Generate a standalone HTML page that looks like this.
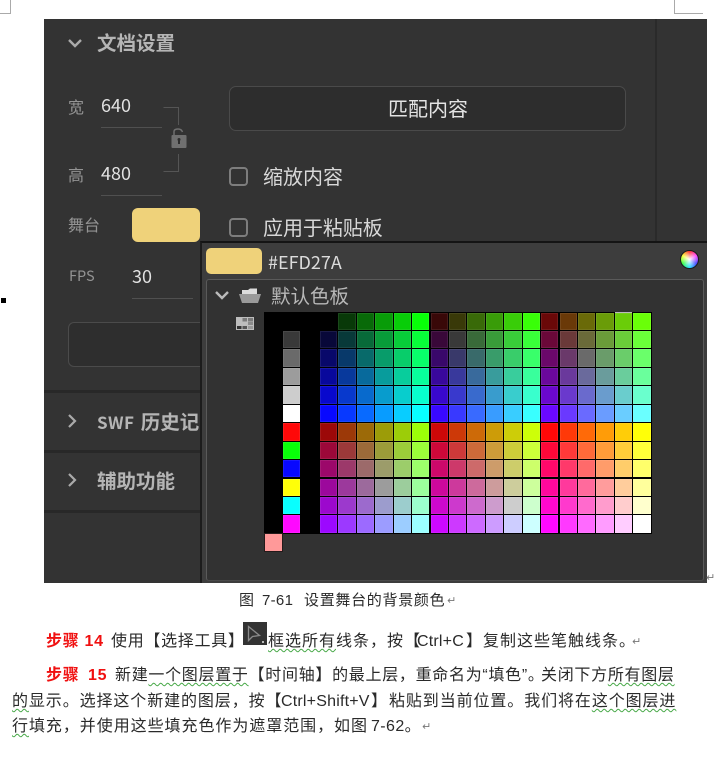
<!DOCTYPE html>
<html lang="zh"><head><meta charset="utf-8"><title>图 7-61</title>
<style>
html,body{margin:0;padding:0;background:#fff}
body{position:relative;width:724px;height:763px;overflow:hidden;font-family:"Liberation Sans","Noto Sans CJK SC",sans-serif}
.a{position:absolute;white-space:nowrap}
.t{position:absolute;white-space:nowrap;line-height:20px;height:20px}
.cn{font-family:"Noto Sans CJK SC",sans-serif}
.line{position:absolute;background:#555}
.sec{position:absolute;left:44px;width:156px;height:3px;background:#282828}
.cb{position:absolute;left:229px;width:15px;height:15px;border:2.5px solid #7d7d7d;border-radius:4px}
#grid{position:absolute;left:264px;top:312px;width:388px;height:221.5px;background:#000;display:grid;grid-template-columns:repeat(21,17.3px);grid-auto-rows:17.3px;gap:1.15px;padding:.6px;box-sizing:border-box}
#grid i{display:block}
#grid i:not([style$="#000"]){box-shadow:inset 0 0 0 1px rgba(255,255,255,.08),inset 0 0 0 30px rgba(255,255,255,.03)}
.body{font-family:"Liberation Sans","Noto Sans CJK SC",sans-serif;font-size:16px;color:#2a2a2a;letter-spacing:.9px;font-weight:400}
.red{color:#f01010;font-weight:700;letter-spacing:.7px}
.w{text-decoration:underline wavy #46a846 1px;text-underline-offset:1.5px}
.l{letter-spacing:.2px}
.ret{position:absolute;color:#777;font-size:11px;line-height:12px;font-family:"DejaVu Sans",sans-serif}
</style></head>
<body>
<!-- page corner marks -->
<div class="line" style="left:10px;top:0;width:1px;height:14px;background:#aaa"></div>
<div class="line" style="left:0;top:13px;width:11px;height:1px;background:#aaa"></div>
<div class="line" style="left:674px;top:0;width:1px;height:14px;background:#aaa"></div>
<div class="line" style="left:674px;top:13px;width:29px;height:1px;background:#aaa"></div>
<div class="line" style="left:1px;top:298px;width:5px;height:5px;background:#000"></div>

<!-- panel -->
<div class="a" style="left:44px;top:19px;width:663px;height:564px;background:#333"></div>
<div class="line" style="left:655px;top:19px;width:2px;height:222px;background:#2a2a2a"></div>

<svg class="a" style="left:67px;top:38px" width="16" height="10" viewBox="0 0 16 10"><path d="M2 2 L8 8 L14 2" fill="none" stroke="#aaa" stroke-width="2.4"/></svg>
<div class="t cn" style="left:97px;top:32px;font-size:19.5px;font-weight:700;color:#b5b5b5">文档设置</div>

<div class="t cn" style="left:68px;top:96px;font-size:16px;color:#949494">宽</div>
<div class="t cn" style="left:101px;top:95px;font-size:18px;color:#e2e2e2">640</div>
<div class="line" style="left:101px;top:127px;width:61px;height:1px;background:#505050"></div>
<div class="t cn" style="left:68px;top:164px;font-size:16px;color:#949494">高</div>
<div class="t cn" style="left:101px;top:163px;font-size:18px;color:#e2e2e2">480</div>
<div class="line" style="left:101px;top:195px;width:61px;height:1px;background:#505050"></div>

<svg class="a" style="left:160px;top:104px" width="30" height="70" viewBox="0 0 30 70">
<path d="M3.5 3.5H18.5V21M18.5 50V67.5H3.5" fill="none" stroke="#555" stroke-width="1"/>
<rect x="11.5" y="31" width="15" height="13" rx="1" fill="#707070"/>
<path d="M14 31V27.5Q14 25 18 25Q21.5 25 22.5 28" fill="none" stroke="#707070" stroke-width="1.5"/>
<rect x="18" y="35" width="2" height="5" fill="#2e2e2e"/><circle cx="19" cy="35.5" r="1.5" fill="#2e2e2e"/>
</svg>

<div class="t cn" style="left:68px;top:214px;font-size:16px;color:#949494">舞台</div>
<div class="a" style="left:132px;top:208px;width:68px;height:34px;background:#efd27a;border-radius:6px"></div>
<div class="t cn" style="left:69px;top:266px;font-size:14.5px;color:#949494">FPS</div>
<div class="t cn" style="left:132px;top:266px;font-size:18px;color:#e2e2e2">30</div>
<div class="line" style="left:132px;top:298px;width:61px;height:1px;background:#505050"></div>
<div class="a" style="left:68px;top:322px;width:160px;height:43px;border:1px solid #4b4b4b;border-radius:6px;background:#2e2e2e"></div>

<div class="sec" style="top:390px"></div>
<div class="sec" style="top:450px"></div>
<div class="sec" style="top:510px"></div>
<svg class="a" style="left:66px;top:413px" width="12" height="16" viewBox="0 0 12 16"><path d="M3 2 L9 8 L3 14" fill="none" stroke="#aaa" stroke-width="2.2"/></svg>
<div class="t cn" style="left:97px;top:411px;font-size:19.5px;font-weight:700;color:#b5b5b5"><span style="font-size:17px;letter-spacing:.4px;margin-right:2px">SWF</span> 历史记录</div>
<svg class="a" style="left:66px;top:472px" width="12" height="16" viewBox="0 0 12 16"><path d="M3 2 L9 8 L3 14" fill="none" stroke="#aaa" stroke-width="2.2"/></svg>
<div class="t cn" style="left:97px;top:470px;font-size:19.5px;font-weight:700;color:#b5b5b5">辅助功能</div>

<div class="a" style="left:229px;top:86px;width:395px;height:43px;border:1.5px solid #4a4a4a;border-radius:7px;background:#2d2d2d"></div>
<div class="t cn" style="left:388px;top:98px;font-size:20px;color:#e4e4e4">匹配内容</div>
<div class="cb" style="top:167px"></div>
<div class="t cn" style="left:263px;top:166px;font-size:20px;color:#d8d8d8">缩放内容</div>
<div class="cb" style="top:218px"></div>
<div class="t cn" style="left:263px;top:217px;font-size:20px;color:#d8d8d8;letter-spacing:-.05px">应用于粘贴板</div>

<!-- colour popup -->
<div class="a" style="left:200px;top:241px;width:507px;height:342px;background:#3d3d3d;border-top:2px solid #141414;border-left:2px solid #1c1c1c;box-sizing:border-box"></div>
<div class="a" style="left:206px;top:248px;width:56px;height:26px;background:#efd27a;border-radius:5px"></div>
<div class="t cn" style="left:268px;top:252px;font-size:18px;color:#dcdcdc">#EFD27A</div>
<div class="a" style="left:680px;top:250px;width:19px;height:19px;border-radius:50%;box-sizing:border-box;border:1px solid #1a1a1a;background:radial-gradient(circle,#fff 0,rgba(255,255,255,0) 70%),conic-gradient(#ff2a2a,#ff40ff,#4040ff,#20e0ff,#30ff40,#ffff30,#ff2a2a)"></div>

<div class="a" style="left:206px;top:279px;width:498px;height:302px;box-sizing:border-box;background:#323232;border:1.5px solid #5a5a5a;border-radius:3px;border-bottom-color:#4a4a4a"></div>
<svg class="a" style="left:214px;top:290px" width="16" height="10" viewBox="0 0 16 10"><path d="M2 2 L8 8 L14 2" fill="none" stroke="#bbb" stroke-width="2.4"/></svg>
<svg class="a" style="left:238px;top:286px" width="24" height="18" viewBox="0 0 24 18"><path d="M4 8V4H10L12 2.5H19V8Z" fill="#dcdcdc"/><path d="M1 8H23L20 17H4Z" fill="#9a9a9a"/></svg>
<div class="t cn" style="left:271px;top:285px;font-size:19.5px;color:#b8b8b8">默认色板</div>
<svg class="a" style="left:235px;top:316px" width="20" height="15" viewBox="0 0 20 15"><rect x="1" y="1" width="18" height="13" fill="#bdbdbd"/><rect x="7.5" y="2" width="4.5" height="3.5" fill="#7a7a7a"/><rect x="13" y="2" width="5" height="3.5" fill="#7a7a7a"/><rect x="13" y="6" width="5" height="3" fill="#8a8a8a"/><rect x="2" y="10" width="4.5" height="3" fill="#333"/><rect x="7.5" y="10" width="4.5" height="3" fill="#555"/><rect x="13" y="10" width="5" height="3" fill="#999"/></svg>

<div id="grid">
<i style="background:#000"></i><i style="background:#000"></i><i style="background:#000"></i><i style="background:#000"></i><i style="background:#030"></i><i style="background:#060"></i><i style="background:#090"></i><i style="background:#0c0"></i><i style="background:#0f0"></i><i style="background:#300"></i><i style="background:#330"></i><i style="background:#360"></i><i style="background:#390"></i><i style="background:#3c0"></i><i style="background:#3f0"></i><i style="background:#600"></i><i style="background:#630"></i><i style="background:#660"></i><i style="background:#690"></i><i style="background:#6c0;border-top:1px solid #bbb;margin-top:-1px"></i><i style="background:#6f0"></i>
<i style="background:#000"></i><i style="background:#333"></i><i style="background:#000"></i><i style="background:#003"></i><i style="background:#033"></i><i style="background:#063"></i><i style="background:#093"></i><i style="background:#0c3"></i><i style="background:#0f3"></i><i style="background:#303"></i><i style="background:#333"></i><i style="background:#363"></i><i style="background:#393"></i><i style="background:#3c3"></i><i style="background:#3f3"></i><i style="background:#603"></i><i style="background:#633"></i><i style="background:#663"></i><i style="background:#693"></i><i style="background:#6c3"></i><i style="background:#6f3"></i>
<i style="background:#000"></i><i style="background:#666"></i><i style="background:#000"></i><i style="background:#006"></i><i style="background:#036"></i><i style="background:#066"></i><i style="background:#096"></i><i style="background:#0c6"></i><i style="background:#0f6"></i><i style="background:#306"></i><i style="background:#336"></i><i style="background:#366"></i><i style="background:#396"></i><i style="background:#3c6"></i><i style="background:#3f6"></i><i style="background:#606"></i><i style="background:#636"></i><i style="background:#666"></i><i style="background:#696"></i><i style="background:#6c6"></i><i style="background:#6f6"></i>
<i style="background:#000"></i><i style="background:#999"></i><i style="background:#000"></i><i style="background:#009"></i><i style="background:#039"></i><i style="background:#069"></i><i style="background:#099"></i><i style="background:#0c9"></i><i style="background:#0f9"></i><i style="background:#309"></i><i style="background:#339"></i><i style="background:#369"></i><i style="background:#399"></i><i style="background:#3c9"></i><i style="background:#3f9"></i><i style="background:#609"></i><i style="background:#639"></i><i style="background:#669"></i><i style="background:#699"></i><i style="background:#6c9"></i><i style="background:#6f9"></i>
<i style="background:#000"></i><i style="background:#ccc"></i><i style="background:#000"></i><i style="background:#00c"></i><i style="background:#03c"></i><i style="background:#06c"></i><i style="background:#09c"></i><i style="background:#0cc"></i><i style="background:#0fc"></i><i style="background:#30c"></i><i style="background:#33c"></i><i style="background:#36c"></i><i style="background:#39c"></i><i style="background:#3cc"></i><i style="background:#3fc"></i><i style="background:#60c"></i><i style="background:#63c"></i><i style="background:#66c"></i><i style="background:#69c"></i><i style="background:#6cc"></i><i style="background:#6fc"></i>
<i style="background:#000"></i><i style="background:#fff"></i><i style="background:#000"></i><i style="background:#00f"></i><i style="background:#03f"></i><i style="background:#06f"></i><i style="background:#09f"></i><i style="background:#0cf"></i><i style="background:#0ff"></i><i style="background:#30f"></i><i style="background:#33f"></i><i style="background:#36f"></i><i style="background:#39f"></i><i style="background:#3cf"></i><i style="background:#3ff"></i><i style="background:#60f"></i><i style="background:#63f"></i><i style="background:#66f"></i><i style="background:#69f"></i><i style="background:#6cf"></i><i style="background:#6ff"></i>
<i style="background:#000"></i><i style="background:#f00"></i><i style="background:#000"></i><i style="background:#900"></i><i style="background:#930"></i><i style="background:#960"></i><i style="background:#990"></i><i style="background:#9c0"></i><i style="background:#9f0"></i><i style="background:#c00"></i><i style="background:#c30"></i><i style="background:#c60"></i><i style="background:#c90"></i><i style="background:#cc0"></i><i style="background:#cf0"></i><i style="background:#f00"></i><i style="background:#f30"></i><i style="background:#f60"></i><i style="background:#f90"></i><i style="background:#fc0"></i><i style="background:#ff0"></i>
<i style="background:#000"></i><i style="background:#0f0"></i><i style="background:#000"></i><i style="background:#903"></i><i style="background:#933"></i><i style="background:#963"></i><i style="background:#993"></i><i style="background:#9c3"></i><i style="background:#9f3"></i><i style="background:#c03"></i><i style="background:#c33"></i><i style="background:#c63"></i><i style="background:#c93"></i><i style="background:#cc3"></i><i style="background:#cf3"></i><i style="background:#f03"></i><i style="background:#f33"></i><i style="background:#f63"></i><i style="background:#f93"></i><i style="background:#fc3"></i><i style="background:#ff3"></i>
<i style="background:#000"></i><i style="background:#00f"></i><i style="background:#000"></i><i style="background:#906"></i><i style="background:#936"></i><i style="background:#966"></i><i style="background:#996"></i><i style="background:#9c6"></i><i style="background:#9f6"></i><i style="background:#c06"></i><i style="background:#c36"></i><i style="background:#c66"></i><i style="background:#c96"></i><i style="background:#cc6"></i><i style="background:#cf6"></i><i style="background:#f06"></i><i style="background:#f36"></i><i style="background:#f66"></i><i style="background:#f96"></i><i style="background:#fc6"></i><i style="background:#ff6"></i>
<i style="background:#000"></i><i style="background:#ff0"></i><i style="background:#000"></i><i style="background:#909"></i><i style="background:#939"></i><i style="background:#969"></i><i style="background:#999"></i><i style="background:#9c9"></i><i style="background:#9f9"></i><i style="background:#c09"></i><i style="background:#c39"></i><i style="background:#c69"></i><i style="background:#c99"></i><i style="background:#cc9"></i><i style="background:#cf9"></i><i style="background:#f09"></i><i style="background:#f39"></i><i style="background:#f69"></i><i style="background:#f99"></i><i style="background:#fc9"></i><i style="background:#ff9"></i>
<i style="background:#000"></i><i style="background:#0ff"></i><i style="background:#000"></i><i style="background:#90c"></i><i style="background:#93c"></i><i style="background:#96c"></i><i style="background:#99c"></i><i style="background:#9cc"></i><i style="background:#9fc"></i><i style="background:#c0c"></i><i style="background:#c3c"></i><i style="background:#c6c"></i><i style="background:#c9c"></i><i style="background:#ccc"></i><i style="background:#cfc"></i><i style="background:#f0c"></i><i style="background:#f3c"></i><i style="background:#f6c"></i><i style="background:#f9c"></i><i style="background:#fcc"></i><i style="background:#ffc"></i>
<i style="background:#000"></i><i style="background:#f0f"></i><i style="background:#000"></i><i style="background:#90f"></i><i style="background:#93f"></i><i style="background:#96f"></i><i style="background:#99f"></i><i style="background:#9cf"></i><i style="background:#9ff"></i><i style="background:#c0f"></i><i style="background:#c3f"></i><i style="background:#c6f"></i><i style="background:#c9f"></i><i style="background:#ccf"></i><i style="background:#cff"></i><i style="background:#f0f"></i><i style="background:#f3f"></i><i style="background:#f6f"></i><i style="background:#f9f"></i><i style="background:#fcf"></i><i style="background:#fff"></i>
</div>
<div class="a" style="left:264px;top:533px;width:19px;height:19px;box-sizing:border-box;background:#f99;border:1px solid #241a1a"></div>

<!-- document text -->
<div class="ret" style="left:706px;top:572px">↵</div>
<div class="t body" style="left:239px;top:591px;font-size:15px">图</div>
<div class="t body" style="left:262px;top:591px;font-size:15px;letter-spacing:.3px">7-61</div>
<div class="t body" style="left:304px;top:591px;font-size:15px;letter-spacing:.7px">设置舞台的背景颜色</div>
<div class="ret" style="left:447px;top:595px">↵</div>

<div class="t body" style="left:46px;top:632px"><span class="red">步骤 14</span></div>
<div class="t body" style="left:111px;top:632px;letter-spacing:.7px">使用【选择工具】</div>
<div class="a" style="left:243px;top:622px;width:24px;height:23px;background:#333"></div>
<svg class="a" style="left:243px;top:622px" width="24" height="23" viewBox="0 0 24 23"><path d="M5.5 4.5V18.5L9.5 14.5L16.5 13.5Z" fill="none" stroke="#8a8a8a" stroke-width="1.3"/><rect x="19" y="19" width="2" height="2" fill="#bbb"/></svg>
<div class="t body" style="left:268px;top:632px;letter-spacing:1px"><span class="w">框选所有</span>线条，按【</div>
<div class="t body" style="left:417px;top:632px"><span class="l">Ctrl+C</span></div>
<div class="t body" style="left:466px;top:632px;letter-spacing:1px">】复制这些笔触线条。</div>
<div class="ret" style="left:632px;top:636px">↵</div>

<div class="t body" style="left:46px;top:666px"><span class="red">步骤</span></div>
<div class="t body" style="left:88px;top:666px"><span class="red">15</span></div>
<div class="t body" style="left:115px;top:666px;letter-spacing:.7px">新建<span class="w">一个图层置于</span>【时间轴】的最上层，重命名为“填色”。</div>
<div class="t body" style="left:541px;top:666px;letter-spacing:.7px">关闭下方<span class="w">所有图层</span></div>

<div class="t body" style="left:12px;top:692px"><span class="w">的</span>显示。选择这个新建的图层，按【</div>
<div class="t body" style="left:281px;top:692px"><span class="l">Ctrl+Shift+V</span></div>
<div class="t body" style="left:371px;top:692px">】</div>
<div class="t body" style="left:389px;top:692px">粘贴到当前位置。我们将在<span class="w">这个图层进</span></div>

<div class="t body" style="left:12px;top:717px;letter-spacing:.95px"><span class="w">行</span>填充，并使用这些填充色作为遮罩范围，如图</div>
<div class="t body" style="left:371px;top:717px;letter-spacing:.4px">7-62。</div>
<div class="ret" style="left:422px;top:721px">↵</div>
</body></html>
